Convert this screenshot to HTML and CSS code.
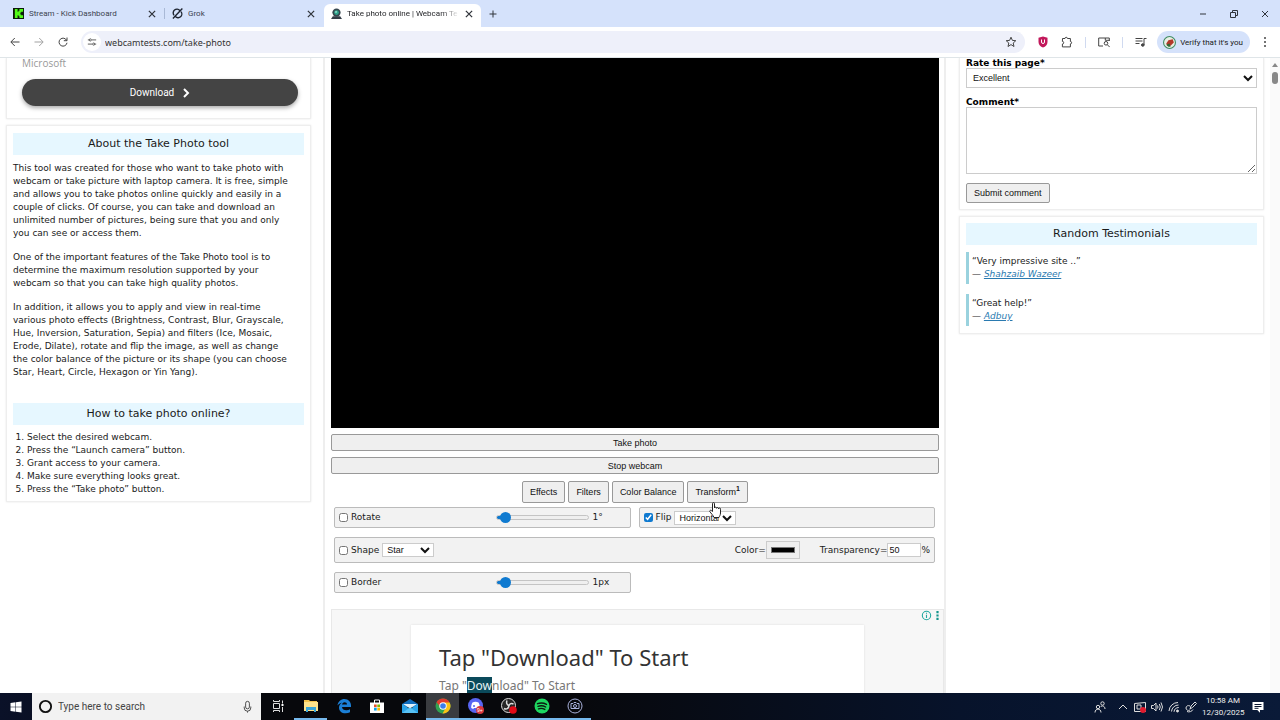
FILE: index.html
```
<!DOCTYPE html>
<html lang="en">
<head>
  <meta charset="UTF-8" />
  <title>Take photo online | Webcam Tests</title>
  <meta name="viewport" content="width=device-width, initial-scale=1.0" />
  <link rel="stylesheet" href="styles.css">
</head>
<body>

  <!-- Browser tabs -->
  <header class="tabs">
    <div class="tab">
      <svg class="favicon" viewBox="0 0 12 12"><path fill="#0b1a08" d="M0 0h12v12H0z"/><path fill="#53fc18" d="M2 1h3v3h1V3h1V1h4v3H9v1H8v2h1v1h2v3H7V9H6V8H5v3H2z"/></svg>
      <span class="tab-title">Stream - Kick Dashboard</span>
      <button class="tab-close" aria-label="Close tab"><svg viewBox="0 0 8 8"><path d="M1.500 1.500l5 5M6.500 1.500l-5 5"/></svg></button>
    </div>
    <div class="tab tab-line">
      <svg class="favicon" viewBox="0 0 12 12" fill="none" stroke="#1d2430" stroke-width="1.500"><path d="M8.500 2.700A4 4 0 0 0 2.300 8M3.700 9.300A4 4 0 0 0 9.700 4M1 11.500L11.300.5"/></svg>
      <span class="tab-title">Grok</span>
      <button class="tab-close" aria-label="Close tab"><svg viewBox="0 0 8 8"><path d="M1.500 1.500l5 5M6.500 1.500l-5 5"/></svg></button>
    </div>
    <div class="tab tab-active">
      <svg class="favicon" viewBox="0 0 12 12"><path fill="#333c46" d="M2 9h8l2 3H0z"/><circle cx="6" cy="5" r="4.500" fill="#37474f"/><circle cx="6" cy="5" r="2.600" fill="#2fa58c"/><circle cx="5.500" cy="4.300" r="1" fill="#9fe3d4"/></svg>
      <span class="tab-title fade">Take photo online | Webcam Te</span>
      <button class="tab-close" aria-label="Close tab"><svg viewBox="0 0 8 8"><path d="M1.500 1.500l5 5M6.500 1.500l-5 5"/></svg></button>
    </div>
    <button class="new-tab" aria-label="New tab"><svg viewBox="0 0 10 10"><path d="M5 1.500v7M1.500 5h7"/></svg></button>
    <div class="win-buttons">
      <button aria-label="Minimize"><svg viewBox="0 0 10 10"><path d="M2 5h6"/></svg></button>
      <button aria-label="Restore"><svg viewBox="0 0 10 10"><path d="M1.500 3.500h5v5h-5zM3.500 3V1.500h5v5H7"/></svg></button>
      <button aria-label="Close"><svg viewBox="0 0 10 10"><path d="M2 2l6 6M8 2L2 8"/></svg></button>
    </div>
  </header>

  <!-- Address bar -->
  <nav class="toolbar">
    <button class="tool" aria-label="Back"><svg viewBox="0 0 12 12"><path d="M10.500 6H2M5.800 2L1.800 6l4 4"/></svg></button>
    <button class="tool dim" aria-label="Forward"><svg viewBox="0 0 12 12"><path d="M1.500 6H10M6.200 2l4 4-4 4"/></svg></button>
    <button class="tool" aria-label="Reload"><svg viewBox="0 0 12 12"><path d="M9.700 4.500A4 4 0 1 0 10 6.800M10 1.500v3.200H6.800"/></svg></button>
    <div class="omnibox">
      <button class="site-info" aria-label="Site information"><svg viewBox="0 0 12 12"><path d="M1 3.500h2M6 3.500h5M1 8.500h5M9 8.500h2"/><circle cx="4" cy="3.500" r="1.300"/><circle cx="8" cy="8.500" r="1.300"/></svg></button>
      <input class="url" type="text" aria-label="Address" value="webcamtests.com/take-photo">
      <button class="tool" aria-label="Bookmark"><svg viewBox="0 0 12 12"><path d="M6 1.200l1.400 3.200 3.400.3-2.600 2.300.8 3.500-3-1.900-3 1.900.8-3.500L1.200 4.700l3.400-.3z"/></svg></button>
    </div>
    <div class="extensions">
      <button class="tool" aria-label="uBlock"><svg viewBox="0 0 12 12"><path fill="#c2185b" stroke="none" d="M6 .5l4.500 1.300V6c0 3-2 4.500-4.500 5.500C3.500 10.500 1.500 9 1.500 6V1.800z"/><path stroke="#fff" d="M4.500 3.500v2.500a1.500 1.500 0 0 0 3 0V3.500"/></svg></button>
      <button class="tool" aria-label="Extensions"><svg viewBox="0 0 12 12"><path d="M1.500 2.500H4a1.200 1.200 0 0 1 2.400 0h3v3a1.200 1.200 0 0 1 0 2.400v3h-8V8a1.300 1.300 0 0 0 0-2.600z"/></svg></button>
      <i class="sep"></i>
      <button class="tool" aria-label="Search tabs"><svg viewBox="0 0 12 12"><path d="M5 10H.7V2h10.600v3M7.300 2v2.300h4"/><circle cx="8" cy="7.300" r="1.800"/><path d="M9.300 8.700l2.400 2.400"/></svg></button>
      <i class="sep"></i>
      <button class="tool" aria-label="Media"><svg viewBox="0 0 12 12"><path d="M.5 2.500h7M.5 5h7M.5 7.500h4M9 9V2.500h2.500"/><circle cx="7.800" cy="9" r="1.300" fill="#444"/></svg></button>
      <button class="profile"><svg viewBox="0 0 12 12"><circle cx="6" cy="6" r="5.500" fill="#e8efe4" stroke="#3f8b63"/><path fill="#b3392b" d="M3 7l2-3 4-1 1 3-3 3-3 0z"/><path fill="#2f6a38" d="M3 8l3-1 1 3-2 0z"/></svg>Verify that it's you</button>
      <button class="tool" aria-label="Menu"><svg viewBox="0 0 12 12"><g fill="#444" stroke="none"><circle cx="6" cy="2" r="1"/><circle cx="6" cy="6" r="1"/><circle cx="6" cy="10" r="1"/></g></svg></button>
    </div>
  </nav>

  <!-- Page -->
  <div class="viewport">
    <aside class="side left">
      <section class="card ad-card">
        <p class="vendor">Microsoft</p>
        <a class="download" href="#">Download <svg viewBox="0 0 8 10"><path d="M2 1l4 4-4 4"/></svg></a>
      </section>
      <section class="card about">
        <h2>About the Take Photo tool</h2>
        <p>This tool was created for those who want to take photo with<br>webcam or take picture with laptop camera. It is free, simple<br>and allows you to take photos online quickly and easily in a<br>couple of clicks. Of course, you can take and download an<br>unlimited number of pictures, being sure that you and only<br>you can see or access them.</p>
        <p>One of the important features of the Take Photo tool is to<br>determine the maximum resolution supported by your<br>webcam so that you can take high quality photos.</p>
        <p>In addition, it allows you to apply and view in real-time<br>various photo effects (Brightness, Contrast, Blur, Grayscale,<br>Hue, Inversion, Saturation, Sepia) and filters (Ice, Mosaic,<br>Erode, Dilate), rotate and flip the image, as well as change<br>the color balance of the picture or its shape (you can choose<br>Star, Heart, Circle, Hexagon or Yin Yang).</p>
        <h2 class="howto">How to take photo online?</h2>
        <ol>
          <li>Select the desired webcam.</li>
          <li>Press the “Launch camera” button.</li>
          <li>Grant access to your camera.</li>
          <li>Make sure everything looks great.</li>
          <li>Press the “Take photo” button.</li>
        </ol>
      </section>
    </aside>

    <main class="main">
      <div class="video"></div>
      <button class="btn wide">Take photo</button>
      <button class="btn wide">Stop webcam</button>
      <div class="btn-row">
        <button class="btn">Effects</button>
        <button class="btn">Filters</button>
        <button class="btn">Color Balance</button>
        <button class="btn">Transform<sup>1</sup></button>
      </div>
      <div class="options">
        <div class="option">
          <label><input type="checkbox">Rotate</label>
          <div class="range-box"><input type="range" min="0" max="100" value="4" aria-label="Rotate angle"><span>1°</span></div>
        </div>
        <div class="option">
          <label><input type="checkbox" checked>Flip</label>
          <select class="flip" aria-label="Flip direction"><option>Horizontal</option><option>Vertical</option></select>
        </div>
        <div class="option full">
          <label><input type="checkbox">Shape</label>
          <select class="shape" aria-label="Shape type"><option>Star</option><option>Heart</option><option>Circle</option></select>
          <label class="color">Color=<input type="color" value="#000000"></label>
          <label class="alpha">Transparency=<input type="text" value="50">%</label>
        </div>
        <div class="option">
          <label><input type="checkbox">Border</label>
          <div class="range-box"><input type="range" min="0" max="100" value="4" aria-label="Border width"><span>1px</span></div>
        </div>
      </div>
      <div class="banner">
        <div class="ad-marks">
          <svg viewBox="0 0 10 10" fill="none" stroke="#23a8a0"><circle cx="5" cy="5" r="3.800"/><path d="M5 4.300v3M5 2.500v1"/></svg>
          <svg viewBox="0 0 10 10" fill="#16958d"><path d="M4 1h2v2H4zM4 4h2v2H4zM4 7h2v2H4z"/></svg>
        </div>
        <div class="banner-card">
          <h3>Tap "Download" To Start</h3>
          <p>Tap "<mark>Dow</mark>nload" To Start</p>
        </div>
      </div>
    </main>

    <aside class="side right">
      <section class="card rate">
        <label for="rate">Rate this page*</label>
        <select id="rate"><option>Excellent</option><option>Good</option></select>
        <label for="comment">Comment*</label>
        <textarea id="comment"></textarea>
        <button class="btn">Submit comment</button>
      </section>
      <section class="card testimonials">
        <h2>Random Testimonials</h2>
        <blockquote>“Very impressive site ..”<br>— <a href="#">Shahzaib Wazeer</a></blockquote>
        <blockquote>“Great help!”<br>— <a href="#">Adbuy</a></blockquote>
      </section>
    </aside>

    <div class="scrollbar"><i class="up"></i><i class="thumb"></i><i class="down"></i></div>
  </div>

  <!-- Taskbar -->
  <footer class="taskbar">
    <button class="start" aria-label="Start"><svg viewBox="0 0 12 12" fill="#fff"><path d="M.5 2l5-.7v4.400h-5zM6 1.200L11.500.5v5.200H6zM.5 6.200h5v4.500l-5-.7zM6 6.200h5.500v5.300L6 10.800z"/></svg></button>
    <div class="search">
      <svg viewBox="0 0 16 16" fill="none" stroke="#111" stroke-width="2"><circle cx="8" cy="8" r="6"/></svg>
      <input type="text" placeholder="Type here to search" aria-label="Search">
      <svg viewBox="0 0 16 16" fill="none" stroke="#444"><rect x="6" y="2.500" width="4" height="8" rx="2"/><path d="M4.500 8v1.500a3.500 3.500 0 0 0 7 0V8M8 13v1.500"/></svg>
    </div>
    <div class="apps">
      <button class="app" aria-label="Task view"><svg viewBox="0 0 16 16" fill="none" stroke="#ddd"><path d="M3.500 5.500h6v5h-6zM3.500 2v1.500h6V2M3.500 14v-1.500h6V14M12.500 2.500v3M12.500 9v5"/><path stroke="#fff" stroke-width="2" d="M12.500 6v2"/></svg></button>
      <button class="app open" aria-label="File Explorer"><svg viewBox="0 0 16 16"><path fill="#f2c34e" d="M1 2h5l1 1h7v3H1z"/><path fill="#fde38c" d="M1 4h14v9H1z"/><path fill="#3aa6d8" d="M3 9h10v5h-2v-2H5v2H3z"/></svg></button>
      <button class="app" aria-label="Edge"><svg viewBox="0 0 16 16"><path fill="#1b7fd6" d="M1.500 7.500C2 3.500 5 1 8.500 1 12.500 1 15 4 15 7.500V9H6c.2 2.300 2 3.300 4.300 3.300 1.500 0 2.700-.4 3.700-1v3c-1.200.6-2.700 1-4.500 1C5.600 15.300 3 13 3 9.500 3 7.300 4.200 5.600 6 4.700 4 4.900 2.500 6 1.500 7.500zM6 6.600h5C11 5 10 4.200 8.600 4.200 7.200 4.200 6.200 5.200 6 6.600z"/></svg></button>
      <button class="app" aria-label="Microsoft Store"><svg viewBox="0 0 16 16"><path fill="none" stroke="#fff" d="M5.500 5V2h5v3"/><path fill="#fff" d="M1 4.500h14V15H1z"/><path fill="#e8502b" d="M5 6.500h2.700v2.700H5z"/><path fill="#7fba00" d="M8.300 6.500H11v2.700H8.300z"/><path fill="#00a4ef" d="M5 9.800h2.700v2.700H5z"/><path fill="#ffb900" d="M8.300 9.800H11v2.700H8.300z"/></svg></button>
      <button class="app" aria-label="Mail"><svg viewBox="0 0 16 16"><path fill="#0f6cbd" d="M0 6l8-5 8 5v3H0z"/><path fill="#29a3e8" d="M0 6l8 5 8-5v9H0z"/><path fill="#dff1fc" d="M1 6h14l-7 4.500z"/><path fill="#58c2f5" d="M0 15l8-5.500L16 15z"/></svg></button>
      <button class="app open current" aria-label="Chrome"><svg viewBox="0 0 16 16"><circle cx="8" cy="8" r="7.500" fill="#31a350"/><path fill="#e33b2e" d="M1.500 4.300A7.500 7.500 0 0 1 14.500 4.300L8 8H4.500z"/><path fill="#fbc117" d="M14.600 4.500A7.500 7.500 0 0 1 7.500 15.500L11 9.500 9 4.500z"/><circle cx="8" cy="8" r="3.700" fill="#fff"/><circle cx="8" cy="8" r="2.800" fill="#3b7ded"/></svg></button>
      <button class="app open" aria-label="Discord"><svg viewBox="0 0 16 16"><circle cx="7.500" cy="7.500" r="7.500" fill="#5865f2"/><path fill="#fff" d="M4.500 4.500c2-1 4-1 6 0 1 1.700 1.500 3.500 1.400 5.500l-2 1-.7-1H6l-.8 1-2-1c-.1-2 .3-3.800 1.300-5.500z"/><circle cx="6" cy="8" r="1" fill="#5865f2"/><circle cx="12" cy="12" r="4" fill="#d8373d"/><text x="9" y="14" font-size="5" font-family="Liberation Sans" fill="#fff">9+</text></svg></button>
      <button class="app open" aria-label="OBS"><svg viewBox="0 0 16 16"><circle cx="7.500" cy="7.500" r="7" fill="#262626" stroke="#ddd"/><path fill="none" stroke="#ddd" stroke-width="1.500" d="M6 2.500c-1 2.500 0 4.500 2 5M12.500 6c-2.500-1-4.500 0-4.500 2M3 10.500c2.500 1.200 4.500 0 5-2.500"/><circle cx="12" cy="12" r="3.800" fill="#e20a17"/></svg></button>
      <button class="app open" aria-label="Spotify"><svg viewBox="0 0 16 16"><circle cx="8" cy="8" r="7.500" fill="#1ed760"/><path fill="none" stroke="#0b1a10" stroke-width="1.400" stroke-linecap="round" d="M3.500 5.700c3-1 6.500-.7 9 .7M4 8.300c2.700-.8 5.500-.5 7.700.7M4.500 10.800c2-.6 4.500-.4 6.300.6"/></svg></button>
      <button class="app open" aria-label="Camera app"><svg viewBox="0 0 16 16" fill="none" stroke="#a9b2dc"><circle cx="8" cy="8" r="7"/><path d="M4 5.500h2l1-1h2l1 1h2v5H4z"/><circle cx="8" cy="8" r="1.500"/></svg></button>
    </div>
    <div class="tray">
      <svg class="people" viewBox="0 0 12 12"><circle cx="4" cy="6" r="1.700"/><path d="M1 11.500c0-4.500 6-4.500 6 0"/><circle cx="8.500" cy="2.500" r="1.700"/><path d="M6.500 6c1.500-2 4.500-1 4.500 2"/></svg>
      <svg viewBox="0 0 12 12"><path d="M2 8l4-4 4 4"/></svg>
      <svg viewBox="0 0 12 12"><path d="M.5 2.500l11-1v9H.500zM3 4h4v4H3z"/><circle cx="9" cy="9" r="3" fill="#e01b2e" stroke="none"/></svg>
      <svg viewBox="0 0 12 12"><path d="M.5 4.500h2L5 2v8L2.500 7.500h-2zM6.500 4.500q1 1.500 0 3M8.300 3q2 3 0 6M10 1.500q3 4.500 0 9"/></svg>
      <svg viewBox="0 0 12 12"><path d="M1 10A9 9 0 0 1 10 1.500M3.500 10.500A7 7 0 0 1 10.500 4M6 10.800A5 5 0 0 1 10.800 6.500"/><circle cx="9.500" cy="10" r="1" fill="#eee"/></svg>
      <svg viewBox="0 0 12 12"><path d="M5 8l1-3 4-4 1.500 1.500-4 4zM5 5c-2-1-4 0-4 2s2 3 4 2M2 10.500c2 1 5 0 6-2"/></svg>
      <div class="clock">10:58 AM<br>12/30/2025</div>
      <svg class="notice" viewBox="0 0 12 12"><path fill="#fff" stroke="none" d="M.5 1h11v8H8v2.700L5.300 9H.500z"/><path stroke="#0a1630" d="M2.500 3.500h7M2.500 5.500h7M2.500 7.300h4"/></svg>
    </div>
  </footer>

  <!-- Mouse pointer -->
  <svg class="pointer" viewBox="0 0 12 16"><path fill="#fff" stroke="#222" d="M3.500 9.500V1.600a1 1 0 0 1 2 0V6a1 1 0 0 1 2 .3 1 1 0 0 1 2 .5 1 1 0 0 1 2 .5V11c0 2-1 3-1.500 4.500H5C4 13 2 11.500.8 9.500.5 8.300 1.800 8 2.500 8.700z"/></svg>

</body>
</html>
```
FILE: styles.css
```
* {
  box-sizing: border-box;
}

body {
  margin: 0;
  height: 100vh;
  display: flex;
  flex-direction: column;
  overflow: hidden;
  background: #fff;
  color: #1a1a1a;
  font-family: 'DejaVu Sans', sans-serif;
  font-size: 9px;
  line-height: 13px;
}

h2, h3, p, ol, blockquote {
  margin: 0;
}

button {
  padding: 0;
  border: none;
  background: none;
  color: inherit;
  font-family: inherit;
}

svg {
  display: block;
  flex: none;
}

/* Tabs */
.tabs {
  display: flex;
  align-items: flex-end;
  flex: none;
  height: 27px;
  background: #d5e2fb;
  font-family: Roboto, sans-serif;
  font-size: 8px;
  color: #3c4350;
}

.tab {
  display: flex;
  align-items: center;
  width: 162px;
  height: 23px;
  padding: 0 5px 4px 13px;
  gap: 5px;
}

.tab-line {
  padding: 0 8px 4px 10px;
}

.tab-line::before {
  content: "";
  width: 1px;
  height: 11px;
  margin-left: -8px;
  margin-right: 2px;
  background: #a9b9d6;
}

.tab-active {
  width: 157px;
  padding: 0 7px 4px 7px;
  background: #fff;
  border-radius: 6px 6px 0 0;
  color: #1f2024;
}

.favicon {
  width: 11px;
  height: 11px;
}

.tab-title {
  flex: 1;
  overflow: hidden;
  white-space: nowrap;
}

.fade {
  mask-image: linear-gradient(90deg, #000 85%, transparent);
}

.tab-close svg,
.new-tab svg,
.win-buttons svg {
  width: 10px;
  height: 10px;
  fill: none;
  stroke: #30343b;
}

.new-tab {
  padding: 0 7px 8px;
}

.win-buttons {
  display: flex;
  gap: 21px;
  margin-left: auto;
  padding: 0 10px 8px 0;
}

/* Toolbar */
.toolbar {
  display: flex;
  align-items: center;
  flex: none;
  height: 31px;
  padding: 0 9px;
  gap: 12px;
  border-bottom: 1px solid #dfe5e8;
  font-family: 'Noto Sans', sans-serif;
}

.tool svg {
  width: 12px;
  height: 12px;
  fill: none;
  stroke: #444;
}

.dim {
  opacity: 0.5;
}

.omnibox {
  display: flex;
  align-items: center;
  flex: 1;
  height: 22px;
  padding: 0 8px 0 2px;
  border-radius: 11px;
  background: #eef0fa;
}

.site-info {
  width: 18px;
  height: 18px;
  padding: 4px;
  border-radius: 50%;
  background: #fff;
}

.site-info svg {
  width: 10px;
  height: 10px;
  fill: none;
  stroke: #444;
}

.url {
  flex: 1;
  padding: 0 4px;
  border: none;
  background: none;
  color: #333;
  font-family: inherit;
  font-size: 9px;
}

.extensions {
  display: flex;
  align-items: center;
  gap: 12px;
}

.sep {
  width: 1px;
  height: 11px;
  background: #d0daf0;
}

.profile {
  display: flex;
  align-items: center;
  height: 22px;
  padding: 0 7px 0 6px;
  margin: 0 -3px 0 -2px;
  gap: 4px;
  border-radius: 11px;
  background: #d5e2fb;
  font-family: Roboto, sans-serif;
  font-size: 8px;
}

.profile svg {
  width: 13px;
  height: 13px;
}

/* Page */
.viewport {
  display: grid;
  grid-template-columns: minmax(0, 323fr) minmax(0, 623fr) minmax(0, 324fr) 10px;
  flex: 1;
  min-height: 0;
  overflow: hidden;
}

.side {
  display: flex;
  flex-direction: column;
  gap: 6px;
}

.left {
  padding: 0 12px 0 6px;
}

.right {
  padding: 0 6px 0 13px;
}

.card {
  border: 1px solid #eee;
  box-shadow: 0 0 2px #e6e6e6;
  padding: 6px;
}

.card h2 {
  padding: 4px 0;
  background: #e6f7ff;
  font-size: 11px;
  font-weight: normal;
  line-height: 14px;
  text-align: center;
}

.ad-card {
  padding: 0 12px 12px 15px;
  border-top: none;
}

.vendor {
  margin-bottom: 11px;
  color: #999;
  font-family: 'Open Sans', sans-serif;
  font-size: 10px;
  line-height: 10px;
}

.download {
  display: flex;
  align-items: center;
  justify-content: center;
  gap: 8px;
  height: 27px;
  border-radius: 14px;
  background: #444;
  box-shadow: 0 2px 4px #aaa;
  color: #fff;
  font-family: Roboto, sans-serif;
  font-size: 10px;
  text-decoration: none;
}

.download svg {
  width: 8px;
  height: 10px;
  fill: none;
  stroke: #fff;
  stroke-width: 2;
}

.about {
  padding: 7px 6px 5px;
}

.about p {
  margin-top: 11px;
  white-space: nowrap;
}

.about h2 + p {
  margin-top: 7px;
}

.about .howto {
  margin-top: 24px;
}

.about ol {
  padding: 6px 0 0 14px;
}

.btn {
  border: 1px solid #999;
  border-radius: 2px;
  background: #efefef;
  color: #111;
  font-family: 'Liberation Sans', sans-serif;
  font-size: 9px;
  line-height: 12px;
}

.main {
  padding: 0 5px 0 6px;
  border: solid #eee;
  border-width: 0 2px;
}

.video {
  height: 370px;
  background: #000;
}

.wide {
  display: block;
  width: 100%;
  height: 17px;
  margin-top: 6px;
}

.btn-row {
  display: flex;
  justify-content: center;
  gap: 3px;
  padding: 7px 0 4px;
}

.btn-row .btn {
  height: 22px;
  padding: 0 7px;
}

.btn sup {
  font-size: 7px;
  font-weight: bold;
  line-height: 0;
}

.options {
  display: grid;
  grid-template-columns: 1fr 1fr;
  gap: 9px 8px;
  padding: 0 4px 0 3px;
}

.option {
  display: flex;
  align-items: center;
  height: 21px;
  padding: 0 4px;
  border: 1px solid #bbb;
  border-radius: 2px;
  background: #f2f2f2;
}

.full {
  grid-column: 1 / 3;
  height: 26px;
}

.option label {
  display: flex;
  align-items: center;
}

.option [type="checkbox"] {
  width: 9px;
  height: 9px;
  margin: 0 3px 0 0;
  accent-color: #0f7ad0;
}

.option select {
  height: 14px;
  margin-left: 3px;
}

select, textarea, .alpha input {
  border: 1px solid #ccc;
  border-radius: 0;
  background-color: #fff;
  color: #111;
  font-family: 'Liberation Sans', sans-serif;
  font-size: 9px;
}

.flip {
  width: 62px;
  padding: 0;
}

.shape {
  width: 52px;
}

.range-box {
  display: flex;
  align-items: center;
  gap: 4px;
  width: 130px;
  margin-left: auto;
}

[type="range"] {
  appearance: none;
  width: 93px;
  height: 5px;
  margin: 0;
  border: 1px solid #c4c4c4;
  border-radius: 3px;
  background: linear-gradient(90deg, #0f7ad0 8%, #efefef 8%);
}

[type="range"]::-webkit-slider-thumb {
  appearance: none;
  width: 11px;
  height: 11px;
  border-radius: 50%;
  background: #0f7ad0;
}

.color {
  margin-left: auto;
}

.color input {
  width: 34px;
  height: 18px;
  padding: 5px 4px;
  border: 1px solid #ccc;
  background: #efefef;
}

.color input::-webkit-color-swatch-wrapper {
  padding: 0;
}

.alpha {
  margin-left: 20px;
}

.alpha input {
  width: 34px;
  height: 14px;
  padding: 0 1px;
}

.banner {
  position: relative;
  height: 120px;
  margin: 16px -5px 0 0;
  padding: 15px 79px 0;
  border: 1px solid #e8e8e8;
  background: #f7f7f7;
}

.ad-marks {
  position: absolute;
  top: 0;
  right: 0;
  display: flex;
}

.ad-marks svg {
  width: 11px;
  height: 11px;
}

.banner-card {
  height: 110px;
  padding: 18px 28px;
  background: #fff;
  box-shadow: 0 0 2px #ddd;
  color: #777;
  font-family: 'Noto Sans', sans-serif;
  font-size: 12px;
  line-height: 16px;
}

.banner-card h3 {
  margin-bottom: 7px;
  color: #333;
  font-size: 22px;
  font-weight: normal;
  line-height: 28px;
}

mark {
  background: #0b4a5b;
  color: #e8f4f6;
}

/* Right column */
.rate {
  display: flex;
  flex-direction: column;
  align-items: stretch;
  border-top: none;
  padding-top: 0;
}

.rate label {
  color: #000;
  font-weight: bold;
  line-height: 10px;
}

.rate select {
  height: 20px;
  margin-bottom: 9px;
  padding: 0 2px;
}

.rate textarea {
  height: 67px;
}

.rate .btn {
  align-self: flex-start;
  height: 20px;
  margin-top: 9px;
  padding: 0 7px;
}

.testimonials {
  padding-bottom: 7px;
}

blockquote {
  margin: 7px 0 10px;
  padding: 3px 0 3px 3px;
  border-left: 3px solid #9ad2de;
}

blockquote:last-child {
  margin-bottom: 0;
}

blockquote a {
  color: #2a7ab0;
  font-style: italic;
}

.scrollbar {
  display: flex;
  flex-direction: column;
  align-items: center;
  padding: 5px 0;
  background: #fafafa;
}

.up, .down {
  border: 3px solid transparent;
}

.up {
  border-top: none;
  border-bottom: 4px solid #888;
}

.down {
  margin-top: auto;
  border-bottom: none;
  border-top: 4px solid #888;
}

.thumb {
  width: 6px;
  height: 12px;
  margin-top: 5px;
  border-radius: 3px;
  background: #888;
}

/* Taskbar */
.taskbar {
  display: flex;
  flex: none;
  height: 27px;
  background: linear-gradient(90deg, #0a1128, #07080c 20%, #07080c 45%, #07132b 75%, #0a1a38);
  color: #eee;
  font-family: Roboto, sans-serif;
}

.start {
  width: 32px;
  padding: 0 10px;
}

.start svg {
  width: 12px;
  height: 12px;
}

.search {
  display: flex;
  align-items: center;
  width: 229px;
  padding: 0 6px;
  gap: 5px;
  background: #f2f2f2;
}

.search svg {
  width: 15px;
  height: 15px;
}

.search input {
  flex: 1;
  min-width: 0;
  padding: 0;
  border: none;
  background: none;
  font-family: inherit;
  font-size: 10px;
}

.search input::placeholder {
  color: #444;
}

.apps {
  display: flex;
}

.app {
  display: flex;
  align-items: center;
  justify-content: center;
  width: 33px;
  border-bottom: 2px solid transparent;
}

.app svg {
  width: 16px;
  height: 16px;
}

.open {
  border-bottom-color: #76b9ed;
}

.current {
  background: #3a3c40;
}

.tray {
  display: flex;
  align-items: center;
  gap: 5px;
  margin-left: auto;
  padding-right: 16px;
}

.tray svg {
  width: 12px;
  height: 12px;
  fill: none;
  stroke: #ddd;
}

.tray .people {
  margin-right: 6px;
}

.clock {
  width: 42px;
  font-size: 8px;
  line-height: 12px;
  text-align: center;
}

.tray .notice {
  margin-left: 3px;
}

.pointer {
  position: absolute;
  left: 709px;
  top: 502px;
  width: 12px;
  height: 16px;
}
```
